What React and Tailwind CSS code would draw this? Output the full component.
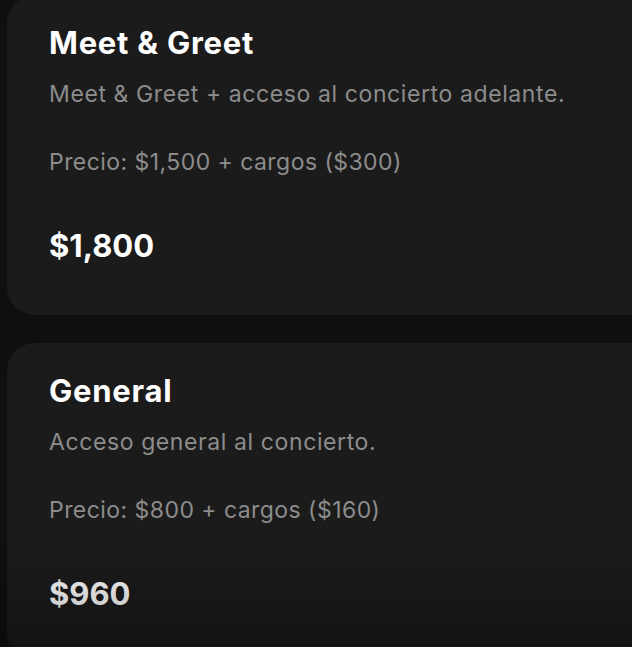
import React from "react";

const tickets = [
  {
    title: "Meet & Greet",
    desc: "Meet & Greet + acceso al concierto adelante.",
    precio: "Precio: $1,500 + cargos ($300)",
    total: "$1,800",
  },
  {
    title: "General",
    desc: "Acceso general al concierto.",
    precio: "Precio: $800 + cargos ($160)",
    total: "$960",
  },
];

function Card({ t }) {
  return (
    <div className="w-[660px] h-[320px] shrink-0 rounded-[28px] bg-[#1b1b1b] pl-[42px] pt-[30px]">
      <h2 className="text-[31px] leading-[36px] font-bold text-white tracking-[0.75px]">{t.title}</h2>
      <p className="mt-[18px] text-[23px] leading-[30px] text-[#8c8c8c] tracking-[0.6px]">{t.desc}</p>
      <p className="mt-[38px] text-[23px] leading-[30px] text-[#8c8c8c] tracking-[0.45px]">{t.precio}</p>
      <p className="mt-[51px] text-[31px] leading-[36px] font-bold text-white">{t.total}</p>
    </div>
  );
}

export default function App() {
  return (
    <div
      className="relative h-[647px] w-[632px] overflow-hidden bg-[#0f0f0f]"
      style={{ fontFamily: "Inter, 'Noto Sans', sans-serif" }}
    >
      <div className="mt-[-5px] flex flex-col gap-[28px] pl-[7px]">
        {tickets.map((t) => (
          <Card key={t.title} t={t} />
        ))}
      </div>
      <div className="pointer-events-none absolute bottom-0 left-0 h-[110px] w-full bg-gradient-to-b from-transparent to-black/30" />
    </div>
  );
}
